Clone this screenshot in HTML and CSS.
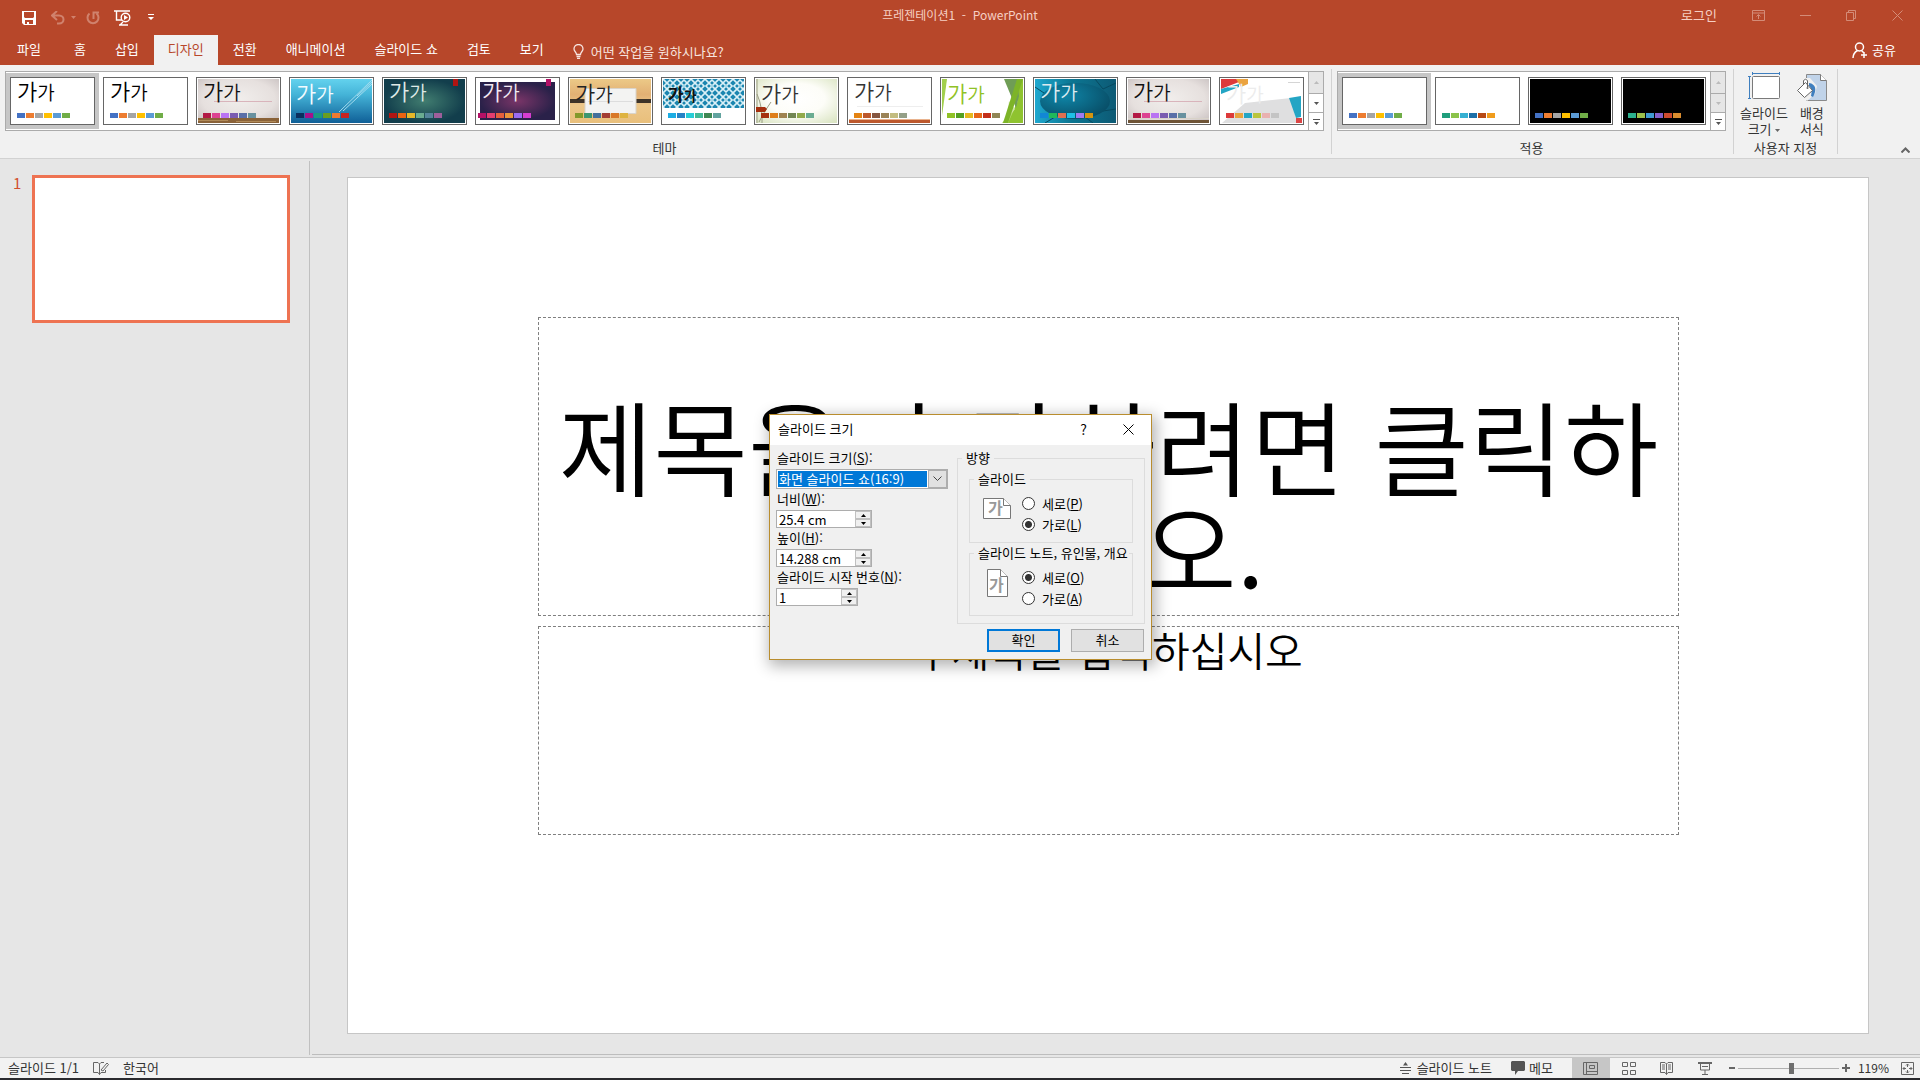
FILE: index.html
```html
<!DOCTYPE html>
<html lang="ko">
<head>
<meta charset="utf-8">
<title>프레젠테이션1 - PowerPoint</title>
<link rel="stylesheet" href="styles.css">
</head>
<body>
<div class="app">
  <header class="titlebar">
    <div class="quick">
      <button class="tool save" aria-label="저장"><svg width="14" height="14"><path fill="#fff" fill-rule="evenodd" d="M0 0h14v14H2l-2-2zM2 1v5l1 1h8l1-1V1zM3 9v4h2v-2h2v2h4V9z"/></svg></button>
      <button class="tool undo" aria-label="실행 취소"><svg width="14" height="14" fill="none" stroke="#d0826d" stroke-width="2"><path d="M6 0L1 4.500l5 4.500M1 4.500h7c6 0 6 8 0 8H6"/></svg></button>
      <button class="tool caret" aria-label="실행 취소 목록"><svg width="5" height="3"><path fill="#d0826d" d="M0 0h5L2.500 3z"/></svg></button>
      <button class="tool redo" aria-label="다시 실행"><svg width="14" height="14" fill="none" stroke="#d0826d" stroke-width="2"><path d="M3.500 2.500a5.500 5.500 0 1 0 7 0M7.500 8V1.500H13"/></svg></button>
      <button class="tool show" aria-label="처음부터"><svg width="17" height="16" fill="none" stroke="#fff" stroke-width="1.400"><path d="M0 1h16M2.500 1v9H8M5 15h9M9 12l-3 3"/><circle cx="11.500" cy="7.500" r="4.300"/><path fill="#fff" stroke="none" d="M10 5l4 2.500-4 2.500z"/></svg></button>
      <button class="tool more" aria-label="빠른 실행 도구 모음 사용자 지정"><svg width="6" height="7" fill="#fff"><path d="M0 0h6v1H0zM0 3h6L3 6z"/></svg></button>
    </div>
    <h1 class="caption">프레젠테이션1&nbsp; -&nbsp; PowerPoint</h1>
    <div class="window-tools">
      <a class="login" href="#">로그인</a>
      <button class="tool" aria-label="리본 표시 옵션"><svg width="13" height="11" fill="none" stroke="#d48c78"><path d="M.5.5h12v10H.5zM.5 3h12M6.500 9V5M4.500 6.500l2-2 2 2"/></svg></button>
      <button class="tool" aria-label="최소화"><svg width="11" height="11" stroke="#d48c78"><path d="M0 5.500h11"/></svg></button>
      <button class="tool" aria-label="이전 크기로 복원"><svg width="11" height="11" fill="none" stroke="#d48c78"><path d="M.5 2.500h7v8h-7zM2.500 2V.5h7v8H8"/></svg></button>
      <button class="tool" aria-label="닫기"><svg width="11" height="11" stroke="#d48c78"><path d="M.5.5l10 10M10.500.5l-10 10"/></svg></button>
    </div>
  </header>
  <nav class="tabs">
    <a class="tab file" href="#">파일</a>
    <a class="tab" href="#">홈</a>
    <a class="tab" href="#">삽입</a>
    <a class="tab active" href="#">디자인</a>
    <a class="tab" href="#">전환</a>
    <a class="tab" href="#">애니메이션</a>
    <a class="tab" href="#">슬라이드 쇼</a>
    <a class="tab" href="#">검토</a>
    <a class="tab" href="#">보기</a>
    <button class="tell"><svg width="11" height="15" fill="none" stroke="#f7e4df" stroke-width="1.300"><path d="M3.500 10.500C3.500 8 1 7.500 1 5a4.400 4.400 0 0 1 9 0c0 2.500-2.500 3-2.500 5.500zM3.500 12.500h4M4 14.300h3"/></svg>어떤 작업을 원하시나요?</button>
    <button class="share"><svg width="16" height="17" fill="none" stroke="#fff" stroke-width="1.500"><circle cx="7.500" cy="5" r="4"/><path d="M1 16c0-4 2-6 4.500-7.500M9.500 8.500l2 2M12 10v6M9 13h6"/></svg>공유</button>
  </nav>
  <section class="ribbon">
    <div class="group themes-group">
      <div class="gallery">
        <div class="thumbs" id="themes"></div>
        <div class="scroll">
          <button disabled aria-label="위로"><svg width="5" height="3"><path d="M0 3h5L2.500 0z"/></svg></button>
          <button aria-label="아래로"><svg width="5" height="3"><path d="M0 0h5L2.500 3z"/></svg></button>
          <button aria-label="자세히"><svg width="7" height="6"><path d="M0 0h7v1H0zM1 3h5L3.500 6z"/></svg></button>
        </div>
      </div>
      <div class="group-label">테마</div>
    </div>
    <div class="group">
      <div class="gallery">
        <div class="thumbs" id="variants"></div>
        <div class="scroll">
          <button disabled aria-label="위로"><svg width="5" height="3"><path d="M0 3h5L2.500 0z"/></svg></button>
          <button disabled aria-label="아래로"><svg width="5" height="3"><path d="M0 0h5L2.500 3z"/></svg></button>
          <button aria-label="자세히"><svg width="7" height="6"><path d="M0 0h7v1H0zM1 3h5L3.500 6z"/></svg></button>
        </div>
      </div>
      <div class="group-label">적용</div>
    </div>
    <div class="group custom">
      <div class="commands">
        <button class="command"><svg width="32" height="30" fill="none"><path stroke="#3f7fbf" d="M5 1.500h27M4.500 0v3M31.500 0v3M1.500 5v22M0 4.500h3M0 26.500h3"/><rect x="4.500" y="4.500" width="27" height="22" rx="1" fill="#fff" stroke="#7a7a7a"/></svg><span>슬라이드<br>크기 <svg class="drop" width="5" height="3"><path fill="#666" d="M0 0h5L2.500 3z"/></svg></span></button>
        <button class="command"><svg width="32" height="30"><path fill="#c0d3e9" stroke="#8a8a8a" d="M10.500 2.500h14l6 6v20h-20z"/><path fill="#fff" stroke="#7a7a7a" d="M24.500 2.500v6h6"/><path fill="#f0f0f0" d="M6 6h8l7 8-2 8-8 7-9-10z"/><path fill="#3f7fbf" d="M13 11c7 1 8 7 4 14l-2-1c1-5 1-7-2-10z"/><path fill="#fff" stroke="#666" d="M1.500 18.500l8-8 7 8-8 7zM7.500 12V8.500q2-2.500 4 0V15"/><circle cx="11.500" cy="16" r="1" fill="#666"/></svg><span>배경<br>서식</span></button>
      </div>
      <div class="group-label">사용자 지정</div>
    </div>
    <button class="collapse" aria-label="리본 메뉴 축소"><svg width="9" height="6" fill="none" stroke="#666" stroke-width="2"><path d="M.5 5.500l4-4 4 4"/></svg></button>
  </section>
  <main class="work">
    <aside class="panel">
      <span class="number">1</span>
      <button class="slide-thumb" aria-label="슬라이드 1"></button>
    </aside>
    <section class="stage">
      <div class="slide">
        <div class="holder title">제목을 추가하려면 클릭하십시오.</div>
        <div class="holder subtitle">부제목을 입력하십시오</div>
      </div>
    </section>
  </main>
  <footer class="status">
    <div class="status-left">
      <span>슬라이드 1/1</span>
      <button class="tool" aria-label="맞춤법 검사"><svg width="16" height="13" fill="none" stroke="#666"><path d="M6.500 12.500V2L5 .5H.5v10H5l1.500 2 1.500-2h4.500V8M6.500 2L8 .5h3M8 8l6-7 1.500 1.500L10 9z"/></svg></button>
      <span>한국어</span>
    </div>
    <div class="status-right">
      <button class="labelled notes"><svg width="12" height="12" fill="#555"><path d="M3 3.500L5.500 0 8 3.500zM0 5h11v1H0zM0 8h11v1H0zM2 11h7v1H2z"/></svg>슬라이드 노트</button>
      <button class="labelled"><svg width="14" height="14" fill="#555"><path d="M1 0h12l1 1v8l-1 1H7l-3 4v-4H1L0 9V1z"/></svg>메모</button>
      <div class="views">
        <button class="view on" aria-label="기본"><svg width="15" height="13" fill="none" stroke="#666"><path d="M.5.5h14v12H.5zM3.500.5v12M3.500 9.500h11M6.500 3.500h5v3h-5z"/></svg></button>
        <button class="view" aria-label="여러 슬라이드"><svg width="14" height="13" fill="none" stroke="#666"><path d="M.5.5h5v4h-5zM8.500.5h5v4h-5zM.5 8.500h5v4h-5zM8.500 8.500h5v4h-5z"/></svg></button>
        <button class="view" aria-label="읽기용 보기"><svg width="14" height="13" fill="none" stroke="#666"><path d="M6.500 12.500V2L5 .5H.5v10H5l1.500 2 1.500-2h4.500V.5H8L6.500 2M2 3h3M2 5h3M2 7h3M8 3h3M8 5h3M8 7h3"/></svg></button>
        <button class="view" aria-label="슬라이드 쇼"><svg width="14" height="13" fill="none" stroke="#666"><path d="M0 1h14" stroke-width="2"/><path d="M2.500 1v7h9V1M4 4.500h6M7 8v4M4 12.500h6"/></svg></button>
      </div>
      <div class="zoom">
        <button class="tool" aria-label="축소"><svg width="6" height="8"><path fill="#666" d="M0 3h6v2H0z"/></svg></button>
        <input type="range" aria-label="확대/축소" min="0" max="100" value="53">
        <button class="tool" aria-label="확대"><svg width="8" height="8"><path fill="#666" d="M0 3h3V0h2v3h3v2H5v3H3V5H0z"/></svg></button>
        <a class="percent" href="#">119%</a>
        <button class="tool" aria-label="창에 맞춤"><svg width="13" height="13" fill="none" stroke="#666"><path d="M.5.5h12v12H.5zM6.500 2v3M6.500 8v3M2 6.500h3M8 6.500h3M5 3.500l1.500-1.500L8 3.500M5 9.500L6.500 11 8 9.500M3.500 5L2 6.500 3.500 8M9.500 5L11 6.500 9.500 8"/></svg></button>
      </div>
    </div>
  </footer>
  <div class="taskbar"></div>

  <form class="dialog" role="dialog" aria-labelledby="dialog-title">
    <div class="dialog-head">
      <h2 id="dialog-title">슬라이드 크기</h2>
      <button type="button" class="help" aria-label="도움말">?</button>
      <button type="button" class="close" aria-label="닫기"><svg width="11" height="11" stroke="#000"><path d="M.5.5l10 10M10.500.5l-10 10"/></svg></button>
    </div>
    <div class="dialog-body">
      <div class="fields">
        <label for="size">슬라이드 크기(<u>S</u>):</label>
        <div class="combo"><select id="size"><option>화면 슬라이드 쇼(16:9)</option></select><span class="arrow"><svg width="9" height="6" fill="none" stroke="#444"><path d="M.5.5l4 4 4-4"/></svg></span></div>
        <label for="width">너비(<u>W</u>):</label>
        <div class="spin"><input id="width" type="text" value="25.4 cm"><span class="steps"><button type="button" aria-label="너비 늘리기"><svg width="5" height="3"><path d="M0 3h5L2.500 0z"/></svg></button><button type="button" aria-label="너비 줄이기"><svg width="5" height="3"><path d="M0 0h5L2.500 3z"/></svg></button></span></div>
        <label for="height">높이(<u>H</u>):</label>
        <div class="spin"><input id="height" type="text" value="14.288 cm"><span class="steps"><button type="button" aria-label="높이 늘리기"><svg width="5" height="3"><path d="M0 3h5L2.500 0z"/></svg></button><button type="button" aria-label="높이 줄이기"><svg width="5" height="3"><path d="M0 0h5L2.500 3z"/></svg></button></span></div>
        <label for="start">슬라이드 시작 번호(<u>N</u>):</label>
        <div class="spin short"><input id="start" type="text" value="1"><span class="steps"><button type="button" aria-label="번호 늘리기"><svg width="5" height="3"><path d="M0 3h5L2.500 0z"/></svg></button><button type="button" aria-label="번호 줄이기"><svg width="5" height="3"><path d="M0 0h5L2.500 3z"/></svg></button></span></div>
      </div>
      <fieldset class="outer">
        <legend>방향</legend>
        <fieldset class="slides">
          <legend>슬라이드</legend>
          <div class="choice">
            <span class="page wide"><svg width="28" height="21" fill="#fff" stroke="#777"><path d="M.5.5h20l7 7v13H.5z"/><path d="M20.500.5v7h7"/></svg><b>가</b></span>
            <div class="radios">
              <label><input type="radio" name="slide">세로(<u>P</u>)</label>
              <label><input type="radio" name="slide" checked>가로(<u>L</u>)</label>
            </div>
          </div>
        </fieldset>
        <fieldset class="handouts">
          <legend>슬라이드 노트, 유인물, 개요</legend>
          <div class="choice">
            <span class="page"><svg width="21" height="28" fill="#fff" stroke="#777"><path d="M.5.5h13l7 7v20H.5z"/><path d="M13.500.5v7h7"/></svg><b>가</b></span>
            <div class="radios">
              <label><input type="radio" name="notes" checked>세로(<u>O</u>)</label>
              <label><input type="radio" name="notes">가로(<u>A</u>)</label>
            </div>
          </div>
        </fieldset>
      </fieldset>
    </div>
    <div class="actions">
      <button type="submit" class="primary">확인</button>
      <button type="button">취소</button>
    </div>
  </form>
</div>
<svg class="defs" width="0" height="0">
  <defs>
    <radialGradient id="g-paper" cx=".5" cy=".45" r=".75"><stop offset="0" stop-color="#f1eeec"/><stop offset=".6" stop-color="#e6e0de"/><stop offset="1" stop-color="#c4bcbc"/></radialGradient>
    <linearGradient id="g-sky" x2="0" y2="1"><stop offset="0" stop-color="#63d2ee"/><stop offset=".35" stop-color="#45b4d8"/><stop offset="1" stop-color="#0f5f97"/></linearGradient>
    <radialGradient id="g-teal"><stop offset="0" stop-color="#417d70"/><stop offset="1" stop-color="#123e4c"/></radialGradient>
    <radialGradient id="g-plum"><stop offset="0" stop-color="#7a3568"/><stop offset="1" stop-color="#2a2149"/></radialGradient>
    <linearGradient id="g-wood" x2="0" y2="1"><stop offset="0" stop-color="#ecc987"/><stop offset=".35" stop-color="#e2b074"/><stop offset=".6" stop-color="#ecc78a"/><stop offset="1" stop-color="#e9bf7b"/></linearGradient>
    <radialGradient id="g-mist" cx=".5" cy=".45" r=".7"><stop offset="0" stop-color="#fff"/><stop offset=".5" stop-color="#fdfdf8"/><stop offset="1" stop-color="#dbe5c4"/></radialGradient>
    <radialGradient id="g-sea" cx=".35" cy=".35" r=".8"><stop offset="0" stop-color="#0f86a8"/><stop offset="1" stop-color="#07475f"/></radialGradient>
    <linearGradient id="g-deep"><stop offset="0" stop-color="#1ea8cf"/><stop offset=".45" stop-color="#0c7692"/><stop offset="1" stop-color="#0d5a75"/></linearGradient>
    <pattern id="p-tile" width="14" height="14" patternUnits="userSpaceOnUse"><path fill="#1b86b0" d="M0 0h14v14H0z"/><path fill="none" stroke="#d9f0f7" stroke-width="1.600" d="M0 0l14 14M14 0L0 14M7 1l6 6-6 6-6-6z"/><path fill="#a8d8e8" d="M6 6h2v2H6z"/></pattern>
  </defs>
</svg>
<script src="galleries.js"></script>
</body>
</html>
```

FILE: galleries.js
```js
const office = ['#4472c4', '#ed7d31', '#a5a5a5', '#ffc000', '#5b9bd5', '#70ad47'];
const rose = ['#b31945', '#dd4291', '#b973f2', '#7a5bb0', '#5a6fa8', '#68919f'];
const themes = [
  { ink: '#000', colors: office, art: '', on: true },
  { ink: '#000', colors: office, art: '' },
  { ink: '#111', colors: rose, art: '<path fill="url(#g-paper)" d="M0 0h81v44H0z"/><path fill="#d9b4bb" d="M16 22h58v1H16z"/><path fill="#8a6238" d="M0 39h81v5H0z"/><path stroke="#b08a58" d="M0 41.500h30M38 42.500h40"/>' },
  { ink: '#f2fbff', size: 'low', colors: ['#0b2f5e', '#a6128a', '#1a9b80', '#6a9e22', '#ee7a31', '#c62322'], art: '<path fill="url(#g-sky)" d="M0 0h81v44H0z"/><path stroke="#a5dcee" fill="none" d="M48 33L81 1M52 32L81 5M66 17l15-14"/>' },
  { ink: '#dfe9e6', colors: ['#b01513', '#ea6312', '#e6b729', '#6aac90', '#54849a', '#9e5e9b'], art: '<path fill="url(#g-teal)" d="M0 0h81v44H0z"/><path fill="#b01513" d="M69 0h5v7h-5z"/>' },
  { ink: '#f2e8f2', start: 1, colors: ['#b31166', '#e33d6f', '#e45f3c', '#e9943a', '#9b6bf2', '#d53dd0'], art: '<path fill="url(#g-plum)" d="M3 3h75v38H3z"/><path fill="#b31166" d="M69 0h5v7h-5z"/>' },
  { ink: '#222', size: 'low', colors: ['#83992a', '#3c9770', '#44709d', '#a23c33', '#d97828', '#deb340'], art: '<path fill="url(#g-wood)" d="M0 0h81v44H0z"/><path fill="#3d3328" d="M0 20h17v4H0zM65 20h16v4H65z"/><path fill="#f3f3f2" stroke="#d9d3c9" d="M15 9.500h51v25H15z"/><path stroke="#ddd" d="M18 22.500h45"/>' },
  { ink: '#111', size: 'bold', colors: ['#1cade4', '#2683c6', '#27ced7', '#42ba97', '#3e8853', '#62a39f'], art: '<path fill="url(#p-tile)" d="M0 0h81v29H0z"/>' },
  { ink: '#333', size: 'low', colors: ['#a53010', '#de7e18', '#9f8351', '#728653', '#92aa4c', '#6aac91'], art: '<path fill="url(#g-mist)" d="M0 0h81v44H0z"/><path fill="none" stroke="#9b9d84" d="M1 0v44M1 15q6 14 5 29M3 43q6-12 12-20"/><path fill="#a53010" d="M0 28h9l2 2-2 3H0z"/>' },
  { ink: '#333', colors: ['#e48312', '#bd582c', '#865640', '#9b8357', '#c2bc80', '#94a088'], art: '<path fill="#eee" d="M8 27h66v1H8z"/><path fill="#e9b38e" d="M0 40h81v1H0z"/><path fill="#bd582c" d="M0 41h81v3H0z"/>' },
  { ink: '#90c226', size: 'low', colors: ['#90c226', '#54a021', '#e6b91e', '#e76618', '#c42f1a', '#918655'], art: '<path fill="#a2cf4c" d="M0 0h5L0 37z"/><path fill="#b5d96d" d="M60 44l13-16V0h8v44z"/><path fill="#8fc32f" d="M71 0h10v44H66l10-22z"/><path fill="#6f9d55" d="M62 0h13l2 17-3 12z"/><path fill="#cfe6a6" d="M67 22l6 8-8 10z"/><path fill="#7db428" d="M75 0h6L66 44h-5z"/>' },
  { ink: '#dcebf0', colors: ['#1287d5', '#20b95b', '#dd7051', '#1fc0e6', '#a07af0', '#d4940f'], art: '<path fill="url(#g-deep)" d="M0 0h81v44H0z"/><path fill="none" stroke="#084a60" d="M0 8l12 8M60 0l8 10 13-6M68 32l13-2M20 38l-10 6M50 38l8 6"/><ellipse cx="40" cy="22" rx="35" ry="18" fill="url(#g-sea)"/>' },
  { ink: '#111', colors: rose, art: '<path fill="url(#g-paper)" d="M0 0h81v44H0z"/><path fill="#d9b4bb" d="M16 22h58v1H16z"/><path fill="#d8d2c8" d="M0 39h81v1H0z"/><path fill="#6f5436" d="M0 41h81v3H0z"/>' },
  { ink: '#ececec', size: 'low', colors: ['#dc3a3a', '#e8a33f', '#24a5c4', '#bac53c', '#e9b1b1', '#c4c4c4'], art: '<path fill="#dc3a3a" d="M0 0h18v3L0 10z"/><path fill="#eba33f" d="M15 0h12v5l-7 3z"/><path fill="#24a5c4" d="M0 10l18-5v3L0 15z"/><path fill="#dfdfe0" d="M1 44l23-20 46-5 6 25z"/><path fill="#24a5c4" d="M68 19l12-2v21l-5 1z"/><path fill="#dc4545" d="M75 39h6v5h-6z"/><path fill="none" stroke="#d5d5d5" d="M67 3.500h12"/>' }
];
const blank = '<path fill="#000" d="M0 0h81v44H0z"/>';
const variants = [
  { colors: office, art: '', on: true },
  { colors: ['#1f9e7c', '#8bc34a', '#35b0d2', '#1c6fa8', '#b84a16', '#f09c1c'], art: '' },
  { colors: office, art: blank },
  { colors: ['#2bb08d', '#9bc04a', '#3f9bd0', '#8460c8', '#cc4a2e', '#d98c2f'], art: blank }
];
function thumb(item, index) {
  const start = item.start ?? 5;
  const swatches = item.colors.map((c, i) => `<path fill="${c}" d="M${start + i * 9} 34h8v5h-8z"/>`).join('');
  const sample = item.ink ? `<span class="sample ${item.size || ''}" style="color:${item.ink}">가<small>가</small></span>` : '';
  return `<button class="thumb${item.on ? ' on' : ''}" aria-label="${index + 1}"><span class="frame"><svg width="81" height="44">${item.art}${swatches}</svg>${sample}</span></button>`;
}
document.getElementById('themes').innerHTML = themes.map(thumb).join('');
document.getElementById('variants').innerHTML = variants.map(thumb).join('');
```

FILE: styles.css
```css
* { box-sizing: border-box; }
body {
  margin: 0;
  font: 13px/16px "Noto Sans CJK KR", sans-serif;
  color: #333;
}
button, input, select {
  font: inherit;
  color: inherit;
  margin: 0;
  padding: 0;
  border: 0;
  background: none;
  border-radius: 0;
}
a { color: inherit; text-decoration: none; }
svg { display: block; flex: none; }
.defs { position: absolute; }

.app {
  display: flex;
  flex-direction: column;
  height: 100vh;
  overflow: hidden;
  background: #e6e6e6;
}
.tool { display: grid; place-items: center; }

/* Title bar */
.titlebar {
  display: grid;
  grid-template-columns: 1fr auto 1fr;
  height: 35px;
  flex: none;
  background: #b7472a;
  color: #f6cfc4;
}
.quick { display: flex; align-items: center; padding-left: 22px; }
.undo { margin-left: 15px; }
.caret { margin-left: 6px; }
.redo { margin-left: 10px; }
.show { margin-left: 14px; }
.more { margin-left: 17px; }
.caption { margin: 0; font: inherit; font-size: 12px; padding-top: 7px; }
.window-tools {
  display: flex;
  justify-content: flex-end;
  align-items: center;
  gap: 35px;
  height: 31px;
  padding-right: 17px;
}
.login { padding-bottom: 1px; }

/* Tabs */
.tabs {
  display: flex;
  height: 30px;
  flex: none;
  gap: 1px;
  padding-left: 3px;
  background: #b7472a;
  color: #fff;
}
.tab { padding: 6px 14px; }
.file { padding-right: 18px; }
.tab.active { background: #f1f1f1; color: #b7472a; }
.tell {
  display: flex;
  align-items: center;
  gap: 7px;
  margin-left: 14px;
  padding-top: 3px;
  color: #f7e4df;
}
.share {
  display: flex;
  align-items: center;
  gap: 4px;
  margin-left: auto;
  padding-right: 24px;
}

/* Ribbon */
.ribbon {
  display: flex;
  height: 94px;
  flex: none;
  background: #f1f1f1;
  border-bottom: 1px solid #d2d2d2;
}
.group {
  display: flex;
  flex-direction: column;
  justify-content: space-between;
  flex: none;
  margin: 4px 0;
  padding: 2px 7px 0 5px;
  border-right: 1px solid #d2d2d2;
}
.themes-group { flex: 0 1 auto; min-width: 0; }
.group-label { text-align: center; line-height: 12px; }
.gallery {
  display: flex;
  height: 60px;
  background: #fff;
  border: 1px solid #ababab;
}
.thumbs { display: flex; min-width: 0; overflow: hidden; padding: 1px 0; }
.thumb { flex: none; padding: 4px; }
.thumb.on { background: #c6c6c6; }
.frame {
  display: block;
  position: relative;
  padding: 1px;
  border: 1px solid #666;
  background: #fff;
}
.sample {
  position: absolute;
  left: 6px;
  top: 0;
  font-size: 22px;
  font-weight: 350;
  line-height: 24px;
  text-align: left;
  white-space: nowrap;
}
.sample small { font-size: 19px; }
.sample.low { top: 2px; }
.sample.bold { top: 4px; font-size: 17px; font-weight: 700; }
.sample.bold small { font-size: 14px; }
.scroll {
  display: grid;
  grid-template-rows: 21px 19px 18px;
  width: 15px;
  flex: none;
  border-left: 1px solid #ababab;
}
.scroll button { display: grid; place-items: center; fill: #555; }
.scroll button + button { border-top: 1px solid #ababab; }
.scroll button:disabled { background: #e6e6e6; fill: #bbb; }
.custom { width: 104px; padding: 2px 0 0; }
.commands { display: flex; gap: 5px; padding-left: 6px; }
.command {
  display: flex;
  flex-direction: column;
  align-items: center;
  gap: 3px;
  min-width: 38px;
  padding-top: 1px;
}
.command > span { white-space: nowrap; }
.drop { display: inline-block; vertical-align: middle; }
.collapse {
  align-self: flex-end;
  margin: 0 10px 5px auto;
}

/* Work area */
.work { display: flex; flex: 1; min-height: 0; }
.panel {
  display: flex;
  align-items: flex-start;
  width: 310px;
  flex: none;
  gap: 10px;
  margin-top: 2px;
  padding: 14px 19px 0 13px;
  border-right: 1px solid #c0c0c0;
}
.number { width: 9px; font-size: 15px; line-height: 16px; color: #d2502e; }
.slide-thumb { flex: 1; height: 148px; border: 3px solid #ee7352; background: #fff; }
.stage {
  flex: 1;
  min-width: 0;
  margin-left: 2px;
  padding: 18px 51px 20px 35px;
  border-bottom: 1px solid #bdbdbd;
}
.slide {
  display: grid;
  grid-template-columns: 190fr 1142fr 189fr;
  grid-template-rows: 139fr 300fr 10fr 209fr 198fr;
  height: 100%;
  background: #fff;
  border: 1px solid #c6c6c6;
  color: #000;
  text-align: center;
}
.holder {
  grid-column: 2;
  min-height: 0;
  border: 1px dashed #7f7f7f;
  font-weight: 350;
}
.title {
  display: flex;
  align-items: flex-end;
  justify-content: center;
  grid-row: 2;
  padding: 0 12px 17px;
  font-size: 103px;
  line-height: 102px;
  word-break: break-all;
}
.subtitle { grid-row: 4; font-size: 41px; line-height: 45px; }

/* Status bar */
.status {
  display: flex;
  justify-content: space-between;
  height: 21px;
  flex: none;
  margin-top: 2px;
  background: #f2f2f2;
  border-top: 1px solid #c6c6c6;
}
.status-left, .status-right, .zoom, .views, .labelled { display: flex; align-items: center; }
.status-left { padding-left: 8px; gap: 14px; }
.status-right { padding-right: 6px; }
.labelled { gap: 4px; margin-right: 19px; }
.notes { gap: 5px; }
.views { align-self: stretch; }
.view { display: grid; place-items: center; align-self: stretch; width: 38px; }
.view.on { background: #c6c6c6; }
.zoom { margin-left: 5px; }
.zoom input {
  appearance: none;
  width: 101px;
  height: 12px;
  margin: 0 3px;
  background: linear-gradient(#b0b0b0, #b0b0b0) center / 100% 1px no-repeat;
}
.zoom input::-webkit-slider-thumb {
  appearance: none;
  width: 5px;
  height: 11px;
  background: #6e6e6e;
}
.percent { margin: 0 12px 0 8px; font-size: 12px; }
.taskbar { height: 2px; flex: none; background: #2a2a2e; }

/* Slide size dialog */
.dialog {
  position: absolute;
  left: calc(50% - 191px);
  top: calc(50% - 126px);
  width: 383px;
  background: #f0f0f0;
  border: 1px solid #b98d2e;
  box-shadow: 2px 4px 14px 2px rgba(0, 0, 0, .3);
  color: #000;
}
.dialog-head {
  display: flex;
  align-items: center;
  height: 30px;
  padding: 0 17px 2px 8px;
  background: #fff;
}
.dialog-head h2 { flex: 1; margin: 0; font: inherit; }
.help { font-size: 14px; }
.close { margin-left: 36px; }
.dialog-body {
  display: flex;
  justify-content: space-between;
  padding: 3px 6px 0;
}
.fields > label { display: block; height: 21px; line-height: 19px; padding-left: 1px; }
u { text-underline-offset: 1px; }
.combo {
  display: flex;
  width: 172px;
  height: 20px;
  padding: 1px;
  background: #fff;
  border: 1px solid #adadad;
}
.combo select {
  appearance: none;
  flex: 1;
  padding-left: 1px;
  background: #0078d7;
  color: #fff;
  line-height: 16px;
}
.combo .arrow {
  display: grid;
  place-items: center;
  width: 19px;
  margin: -1px -1px -1px 1px;
  background: #e1e1e1;
  border: 1px solid #adadad;
}
.spin {
  display: flex;
  width: 96px;
  height: 18px;
  background: #fff;
  border: 1px solid #adadad;
}
.spin.short { width: 82px; }
.spin input { flex: 1; min-width: 0; padding: 2px 0 0 2px; }
.steps { display: grid; grid-template-rows: 1fr 1fr; width: 16px; }
.steps button { display: grid; place-items: center; background: #f0f0f0; border: 1px solid #c0c0c0; }
fieldset { margin: 0; border: 1px solid #dcdcdc; min-width: 0; }
legend { height: 21px; line-height: 19px; padding: 0 4px; }
.outer { width: 188px; padding: 0 11px 7px; }
.outer > legend { margin-left: -7px; }
.slides, .handouts { width: 164px; padding: 0 0 6px 12px; white-space: nowrap; }
.slides { padding-bottom: 7px; }
.slides > legend, .handouts > legend { margin-left: -8px; }
.handouts > legend { padding-right: 1px; }
.choice { display: flex; gap: 10px; padding-top: 3px; }
.page {
  display: grid;
  justify-items: center;
  align-self: flex-start;
  position: relative;
  width: 30px;
  margin-top: 2px;
}
.page.wide { margin-top: 5px; }
.page b {
  position: absolute;
  bottom: 4px;
  left: 7px;
  font-size: 16px;
  line-height: 18px;
  color: #999;
}
.page.wide b { bottom: 3px; left: 6px; }
.radios label { display: flex; align-items: center; gap: 7px; height: 21px; }
.radios label > u { margin: 0 -7px; }
.radios input {
  appearance: none;
  width: 13px;
  height: 13px;
  border: 1px solid #333;
  border-radius: 50%;
  background: #fff;
}
.radios input:checked { background: radial-gradient(circle, #333 3px, #fff 4px); }
.actions {
  display: flex;
  justify-content: flex-end;
  gap: 11px;
  padding: 5px 7px 7px;
}
.actions button {
  width: 73px;
  height: 23px;
  padding-bottom: 2px;
  background: #e1e1e1;
  border: 1px solid #adadad;
}
.actions .primary { border: 2px solid #0078d7; }
```
